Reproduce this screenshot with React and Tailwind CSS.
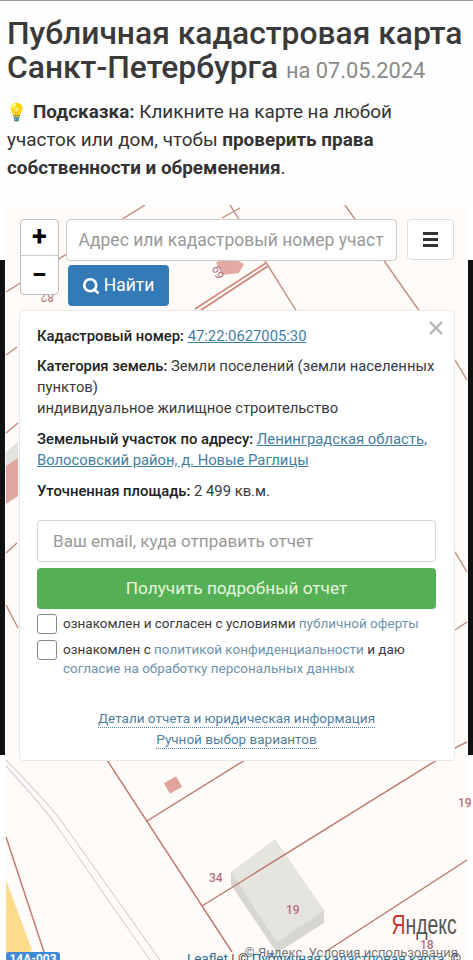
import { Search, X } from "lucide-react"

function MapDrawing() {
  const line = "#c08a80"
  return (
    <svg className="absolute inset-0 w-full h-full" viewBox="0 205 473 755" fill="none">
      <rect x="6" y="205" width="462" height="755" fill="#fefbf8" />

      {/* upper parcels */}
      <g stroke={line} strokeWidth="1.4">
        <path d="M145 205L6 292" />
        <path d="M230 205L297 312" />
        <path d="M222 218L240 208" />
        <path d="M345 205L420 312" />
        <path d="M268 266L198 312M266 263L195 309" strokeWidth="1.8" stroke="#d08a7d" />
        <path d="M17 347L6 355M18 423L6 433M17 543L6 553M6 605L18 628" />
        <path d="M455 360L467 380M455 552L467 572M455 630L467 622M455 748L467 742" />
      </g>
      <path d="M216 262l17-4 11 6-5 9-17 2z" fill="#e3aaa5" />
      <text transform="translate(218 262) rotate(65) scale(-1 -1) translate(-16 0)" fontSize="12" fill="#b9737a" fontFamily="Roboto, sans-serif">69</text>
      <text transform="translate(54 293) rotate(180)" fontSize="12" fill="#b9737a" fontFamily="Roboto, sans-serif">82</text>
      <path d="M6 452L18 442V458L6 466Z" fill="#e4e2dd" />
      <path d="M6 466L18 458V496L6 504Z" fill="#dfa6a0" />

      {/* road + yellow strip */}
      <path d="M6 880L32 950L20 960H6Z" fill="#fbdc8c" />
      <path d="M6 760C30 785 50 805 62 822L160 960" stroke="#d5d5d8" strokeWidth="1.2" />
      <path d="M6 766C28 790 44 808 56 825L150 960" stroke="#d5d5d8" strokeWidth="1.2" />

      {/* lower parcels */}
      <path d="M231 872L275 839L324 910L277 942Z" fill="#e6e4df" />
      <path d="M231 872L277 942L324 910V923L277 953L231 885Z" fill="#d8d6d0" />
      <g stroke="#bd766d" strokeWidth="1.4">
        <path d="M107 760L232 952" />
        <path d="M245 760L147 821" />
        <path d="M437 760L202 906" />
        <path d="M467 860L325 952" />
        <path d="M6 837L45 955" />
      </g>
      <rect x="-7" y="-6" width="14" height="12" transform="translate(173 785) rotate(-30)" fill="#dfa39c" />
      <g fontFamily="Roboto, sans-serif" fontSize="12" fontWeight="500" fill="#b5717f">
        <text x="209" y="882">34</text>
        <text x="286" y="914">19</text>
        <text x="420" y="949">18</text>
        <text x="458" y="807">19</text>
      </g>
    </svg>
  )
}

export default function App() {
  return (
    <div className="w-[473px] h-[960px] overflow-hidden bg-white text-[#333] font-['Roboto',sans-serif] flex flex-col">
      <div className="h-[205px] pl-[7px] pt-[16px] bg-[#fefefe] border-t border-[#999]">
        <h1 className="text-[31.8px] leading-[33.5px] font-medium text-[#3a3a3a] whitespace-nowrap">
          Публичная кадастровая карта
          <br />
          Санкт-Петербурга <small className="text-[21.8px] font-normal text-[#8a8a8a]">на 07.05.2024</small>
        </h1>
        <p className="mt-[11px] text-[18.9px] leading-[27.4px] text-[#333]">
          <span className="text-[17px] mr-[6px] -ml-px">💡</span>
          <b className="font-bold">Подсказка:</b> Кликните на карте на любой
          <br />
          участок или дом, чтобы <b className="font-bold">проверить права</b>
          <br />
          <b className="font-bold">собственности и обременения</b>.
        </p>
      </div>

      <div className="relative flex-1">
        <MapDrawing />

        {/* black phone edges */}
        <div className="absolute left-0 top-[55px] w-[5px] h-[495px] bg-[#111]" />
        <div className="absolute right-0 top-[55px] w-[5px] h-[495px] bg-[#111]" />

        {/* top controls */}
        <div className="absolute top-[14px] left-[20px] right-[19px] flex items-start">
          <div className="w-[39px] h-[76px] flex flex-col bg-white border border-[#bdbdbd] rounded-[4px] text-black">
            <div className="h-[36px] flex items-center justify-center border-b border-[#ccc] text-[27px] font-bold leading-none">+</div>
            <div className="flex-1 flex items-center justify-center text-[27px] font-bold leading-none">−</div>
          </div>
          <div className="ml-[7px] w-[331px] flex flex-col items-start">
            <div className="w-full h-[42px] bg-white border border-[#ccc] rounded-[4px] pl-3 pr-[12px] flex items-center overflow-hidden">
              <span className="text-[17.5px] text-[#999] whitespace-nowrap overflow-hidden">Адрес или кадастровый номер участка</span>
            </div>
            <button className="mt-1 ml-[2px] w-[101px] h-[41px] bg-[#337ab7] rounded-[4px] text-white text-[17.5px] flex items-center justify-center gap-[4px]">
              <Search size={18} strokeWidth={3.5} />
              Найти
            </button>
          </div>
          <button className="ml-[10px] w-[48px] h-[41px] bg-white border border-[#ddd] rounded-[4px] flex flex-col items-center justify-center gap-[3px]">
            <span className="w-[15px] h-[3px] bg-[#333]" />
            <span className="w-[15px] h-[3px] bg-[#333]" />
            <span className="w-[15px] h-[3px] bg-[#333]" />
          </button>
        </div>

        {/* parcel popup */}
        <div className="absolute top-[105px] left-[19px] w-[436px] h-[451px] bg-white border border-[#e8e8e8] rounded-[4px] pl-[17px] pr-[18px] pt-[15px] text-[14.8px] leading-[21px] text-[#3a3a3a]">
          <X size={22} strokeWidth={2.6} className="absolute top-[6px] right-[7px] text-[#b5b5b5]" />
          <p className="whitespace-nowrap">
            <b className="font-medium text-[#222]">Кадастровый номер:</b> <a className="text-[#3f7fa5] underline">47:22:0627005:30</a>
          </p>
          <p className="mt-[9px] whitespace-nowrap">
            <b className="font-medium text-[#222]">Категория земель:</b> Земли поселений (земли населенных
            <br />
            пунктов)
            <br />
            индивидуальное жилищное строительство
          </p>
          <p className="mt-[10px] whitespace-nowrap">
            <b className="font-medium text-[#222]">Земельный участок по адресу:</b> <a className="text-[#3f7fa5] underline">Ленинградская область,</a>
            <br />
            <a className="text-[#3f7fa5] underline">Волосовский район, д. Новые Раглицы</a>
          </p>
          <p className="mt-[10px]">
            <b className="font-medium text-[#222]">Уточненная площадь:</b> 2 499 кв.м.
          </p>

          <div className="mt-[18px] h-[42px] border border-[#d4d4d4] rounded-[4px] pl-[15px] flex items-center text-[17.1px] text-[#999]">
            Ваш email, куда отправить отчет
          </div>
          <button className="mt-[6px] w-full h-[41px] bg-[#55b055] rounded-[4px] text-[#e8f6df] text-[17.2px]">
            Получить подробный отчет
          </button>

          <div className="mt-[5px] flex items-start gap-[6px] text-[13.5px] leading-[19px]">
            <span className="w-[20px] h-[20px] shrink-0 border border-[#888] rounded-[3px]" />
            <span className="whitespace-nowrap">
              ознакомлен и согласен с условиями <a className="text-[#6f93ac]">публичной оферты</a>
            </span>
          </div>
          <div className="mt-[6px] flex items-start gap-[6px] text-[13.5px] leading-[19px]">
            <span className="w-[20px] h-[20px] shrink-0 border border-[#888] rounded-[3px]" />
            <span>
              ознакомлен с <a className="text-[#6f93ac]">политикой конфиденциальности</a> и даю
              <br />
              <a className="text-[#6f93ac]">согласие на обработку персональных данных</a>
            </span>
          </div>

          <div className="mt-[31px] flex flex-col items-center text-[13.5px] leading-[18px] text-[#4f7f9d]">
            <a className="border-b border-dotted border-[#4f7f9d]">Детали отчета и юридическая информация</a>
            <a className="mt-[2px] border-b border-dotted border-[#4f7f9d]">Ручной выбор вариантов</a>
          </div>
        </div>

        {/* map attribution */}
        <div className="absolute right-[16px] top-[705px] font-['Liberation_Sans',sans-serif] text-[27px] leading-[30px] text-[#555] scale-x-[0.72] origin-right">
          <span className="text-[#c0392b]">Я</span>ндекс
        </div>
        <div className="absolute right-[15px] top-[740px] text-[13px] leading-[15px] text-[#777] whitespace-nowrap">
          © Яндекс. Условия использования
        </div>
        <div className="absolute right-[12px] top-[745px] text-[13.5px] leading-[16px] text-[#333] whitespace-nowrap">
          <a className="text-[#2a6f97]">Leaflet</a> | © <a className="text-[#2a6f97] underline">Публичная кадастровая карта</a>, ©
        </div>
        <div className="absolute left-[6px] top-[747px] w-[54px] h-[13px] bg-[#3f88d8] rounded-t-[3px] text-white text-[12px] leading-[14px] font-bold text-center overflow-hidden">
          14A-003
        </div>
      </div>
    </div>
  )
}
